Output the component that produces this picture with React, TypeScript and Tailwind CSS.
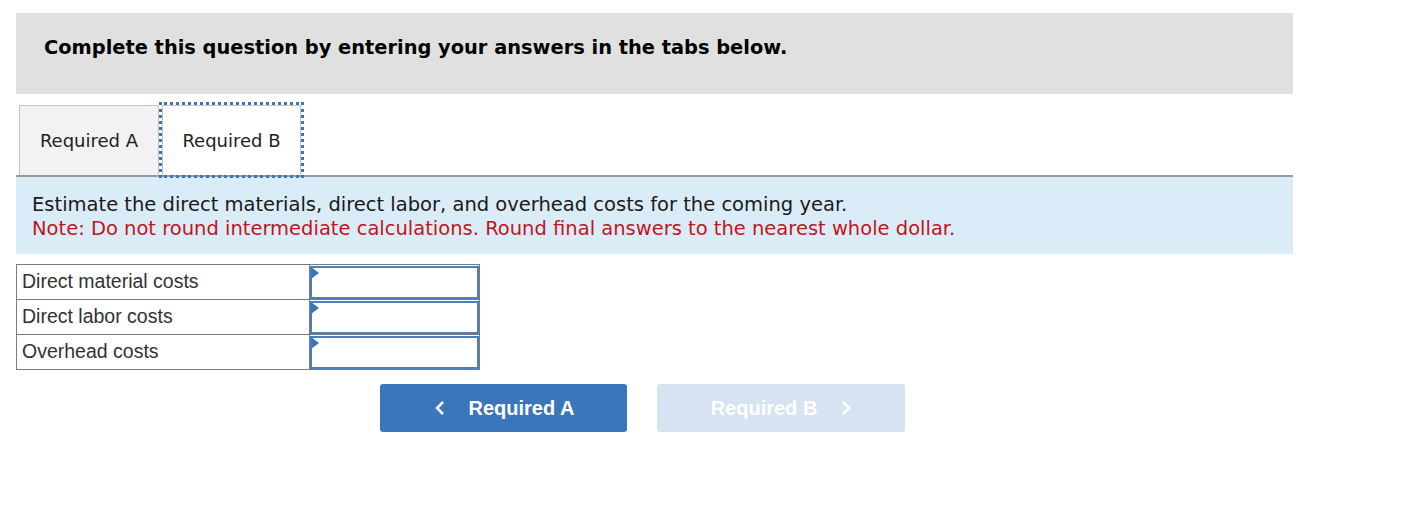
const rows = ["Direct material costs", "Direct labor costs", "Overhead costs"];

const AnswerInput = () => {
  return (
    <div className="relative h-[33px] w-full border-2 border-[#4a7fc4] bg-white">
      <div className="absolute -left-[1px] -top-[1px] h-0 w-0 border-y-[6px] border-l-[8px] border-y-transparent border-l-[#3a76b9]" />
    </div>
  );
};

const Tabs = () => {
  return (
    <div className="flex flex-row items-end border-b-2 border-[#9a9a9a] pl-[3px] pt-[11px]">
      <div className="flex h-[70px] w-[140px] items-center justify-center border border-b-0 border-[#c4c4c4] bg-[#f2f2f2] text-[18px] text-[#222] font-['DejaVu_Sans',Verdana,sans-serif]">
        Required A
      </div>
      <div className="ml-[3px] flex h-[70px] w-[139px] items-center justify-center border border-b-0 border-[#c4c4c4] bg-white text-[18px] text-[#222] outline-[3px] outline-dotted outline-offset-0 outline-[#3a76b9] font-['DejaVu_Sans',Verdana,sans-serif]">
        Required B
      </div>
    </div>
  );
};

const App = () => {
  return (
    <div className="w-[1403px] h-[519px] bg-white">
      <div className="ml-[16px] w-[1277px] pt-[13px]">
        <div className="flex h-[81px] items-start bg-[#e0e0e0] pl-[28px] pt-[22px]">
          <p className="text-[19.4px] leading-[26px] font-bold text-black font-['DejaVu_Sans',Verdana,sans-serif]">
            Complete this question by entering your answers in the tabs below.
          </p>
        </div>
        <Tabs />
        <div className="h-[77px] bg-[#dbecf9] px-[16px] pt-[16px] text-[19.5px] leading-[24px] font-['DejaVu_Sans',Verdana,sans-serif]">
          <p className="text-[#1a1a1a]">Estimate the direct materials, direct labor, and overhead costs for the coming year.</p>
          <p className="text-[#c0161b]">Note: Do not round intermediate calculations. Round final answers to the nearest whole dollar.</p>
        </div>
        <table className="mt-[10px] border-collapse font-['Liberation_Sans',Arial,sans-serif]">
          <tbody>
            {rows.map((r) => (
              <tr key={r}>
                <td className="h-[35px] w-[293px] border border-[#7a7a7a] px-[5px] pb-[2px] text-[19.5px] leading-[22px] text-[#333] align-middle">
                  {r}
                </td>
                <td className="w-[170px] border border-[#7a7a7a] p-0 align-middle">
                  <AnswerInput />
                </td>
              </tr>
            ))}
          </tbody>
        </table>
        <div className="mt-[14px] flex flex-row gap-[30px] pl-[364px] font-['Liberation_Sans',Arial,sans-serif]">
          <button className="flex h-[48px] w-[247px] items-center justify-center gap-[24px] rounded-[3px] bg-[#3a76b9] pl-[2px] text-[20px] font-bold text-white">
            <svg width="10" height="16" viewBox="0 0 10 16" fill="none">
              <path d="M8 2 L2 8 L8 14" stroke="white" strokeWidth="2.5" />
            </svg>
            Required A
          </button>
          <button className="flex h-[48px] w-[248px] items-center justify-center gap-[24px] rounded-[3px] bg-[#d7e3f0] text-[20px] font-bold text-white">
            Required B
            <svg width="10" height="16" viewBox="0 0 10 16" fill="none">
              <path d="M2 2 L8 8 L2 14" stroke="white" strokeWidth="2.5" />
            </svg>
          </button>
        </div>
      </div>
    </div>
  );
};

export default App;
